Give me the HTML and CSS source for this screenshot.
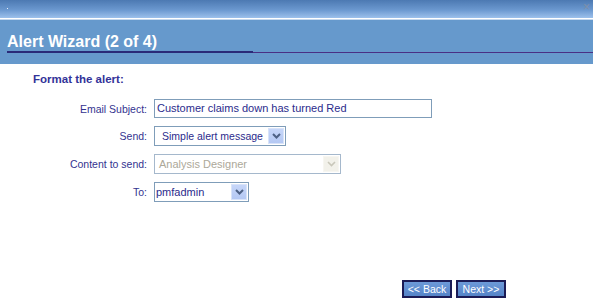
FILE: index.html
```html
<!DOCTYPE html>
<html>
<head>
<meta charset="utf-8">
<title>Alert Wizard</title>
<link rel="stylesheet" href="styles.css">
</head>
<body>
<div class="window">
  <div class="titlebar">
    <span class="dot"></span>
    <span class="close">×</span>
  </div>
  <div class="header">
    <h1 class="title">Alert Wizard (2 of 4)</h1>
    <div class="rule"><span class="rule-thick"></span><span class="rule-thin"></span></div>
  </div>
  <div class="content">
    <h2 class="section">Format the alert:</h2>
    <div class="form">
      <label class="label">Email Subject:</label>
      <div class="field"><div class="textbox">Customer claims down has turned Red</div></div>

      <label class="label">Send:</label>
      <div class="field">
        <div class="select select-send">
          <span class="select-text pad-wide">Simple alert message</span>
          <span class="arrow"><svg width="9" height="6" viewBox="0 0 9 6"><path d="M1 1 L4.5 4.5 L8 1" fill="none" stroke="#4d6185" stroke-width="2"/></svg></span>
        </div>
      </div>

      <label class="label">Content to send:</label>
      <div class="field">
        <div class="select select-content disabled">
          <span class="select-text pad-mid">Analysis Designer</span>
          <span class="arrow"><svg width="9" height="6" viewBox="0 0 9 6"><path d="M1 1 L4.5 4.5 L8 1" fill="none" stroke="#c9c7ba" stroke-width="1.6"/></svg></span>
        </div>
      </div>

      <label class="label">To:</label>
      <div class="field">
        <div class="select select-to">
          <span class="select-text pad-narrow">pmfadmin</span>
          <span class="arrow"><svg width="9" height="6" viewBox="0 0 9 6"><path d="M1 1 L4.5 4.5 L8 1" fill="none" stroke="#4d6185" stroke-width="2"/></svg></span>
        </div>
      </div>
    </div>
  </div>
  <div class="buttons">
    <button class="btn">&lt;&lt; Back</button>
    <button class="btn">Next &gt;&gt;</button>
  </div>
</div>
</body>
</html>
```

FILE: styles.css
```css
html, body {
  margin: 0;
  padding: 0;
  background: #ffffff;
}

.window {
  width: 593px;
  height: 303px;
  display: flex;
  flex-direction: column;
  font-family: "Liberation Sans", Arial, sans-serif;
  overflow: hidden;
}

.titlebar {
  height: 18px;
  background: linear-gradient(to bottom, #4c79b2 0%, #6b98cf 55%, #9dc1ec 100%);
  border-bottom: 1px solid #ffffff;
  display: flex;
  align-items: center;
  justify-content: space-between;
  padding: 0 3px 0 7px;
  box-sizing: content-box;
}

.dot {
  width: 1px;
  height: 1px;
  background: #e8f0fb;
  margin-top: -2px;
}

.close {
  font-size: 12px;
  line-height: 12px;
  color: #7f8fa8;
  margin-top: -4px;
}

.header {
  background: #6699cc;
  border-top: 1px solid #c5d8ee;
  padding: 12px 0 11px 7px;
}

.title {
  margin: 0;
  font-size: 16px;
  line-height: 19px;
  font-weight: bold;
  color: #ffffff;
}

.rule {
  display: flex;
  align-items: flex-end;
  height: 2px;
}

.rule-thick {
  width: 246px;
  height: 2px;
  background: #2a2a78;
}

.rule-thin {
  flex: 1;
  height: 1px;
  background: #4a2f84;
}

.section {
  margin: 8px 0 0 33px;
  font-size: 11.5px;
  line-height: 14px;
  font-weight: bold;
  color: #333399;
}

.form {
  margin-top: 13px;
  display: grid;
  grid-template-columns: 147px auto;
  column-gap: 7px;
  row-gap: 8px;
  align-items: center;
}

.label {
  text-align: right;
  font-size: 10.5px;
  color: #33338f;
  white-space: nowrap;
}

.field {
  display: flex;
}

.textbox {
  width: 278px;
  height: 19px;
  box-sizing: border-box;
  border: 1px solid #7f9db9;
  padding-left: 2px;
  font-size: 11px;
  line-height: 17px;
  color: #2b2b8c;
  white-space: nowrap;
}

.select {
  height: 20px;
  box-sizing: border-box;
  border: 1px solid #7f9db9;
  display: flex;
  align-items: stretch;
  background: #ffffff;
}

.select-send { width: 132px; }
.select-content { width: 187px; }
.select-to { width: 95px; }

.select-text {
  flex: 1;
  font-size: 11px;
  line-height: 18px;
  color: #2b2b8c;
  white-space: nowrap;
}

.pad-wide { padding-left: 7px; font-size: 10.5px; }
.pad-mid { padding-left: 4px; }
.pad-narrow { padding-left: 1px; }

.arrow {
  width: 16px;
  margin: 1px;
  box-sizing: border-box;
  display: flex;
  align-items: center;
  justify-content: center;
  background: linear-gradient(to bottom, #c6d6f9 0%, #b4c8f3 100%);
  border: 1px solid #d8e3f9;
}

.disabled {
  border-color: #a5b8cc;
}

.disabled .select-text {
  color: #aca899;
}

.disabled .arrow {
  background: #f2f1ea;
  border-color: #f7f6f1;
}

.buttons {
  margin-top: auto;
  display: flex;
  justify-content: flex-end;
  gap: 4px;
  padding: 0 87px 5px 0;
}

.btn {
  width: 50px;
  height: 18px;
  box-sizing: border-box;
  border: 2px solid #1b1b55;
  background: linear-gradient(to bottom, #6d9ad8 0%, #5584c8 100%);
  color: #ffffff;
  font-family: "Liberation Sans", Arial, sans-serif;
  font-size: 10.5px;
  line-height: 14px;
  padding: 0;
  margin: 0;
}
```
